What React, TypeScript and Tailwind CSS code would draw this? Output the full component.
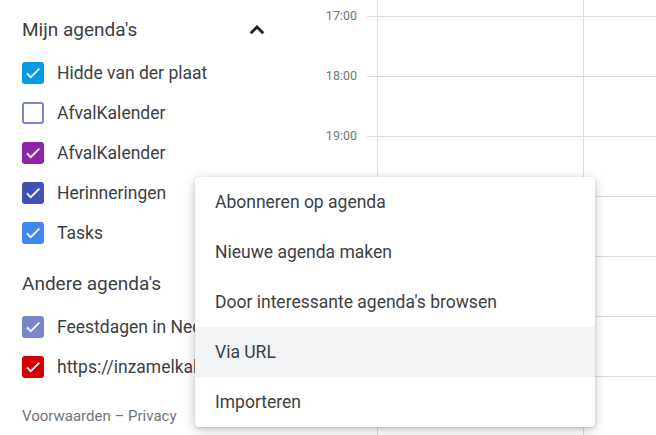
import React from 'react';

type Cal = { name: string; color: string; checked: boolean };

const mine: Cal[] = [
  { name: 'Hidde van der plaat', color: '#039be5', checked: true },
  { name: 'AfvalKalender', color: '#7986cb', checked: false },
  { name: 'AfvalKalender', color: '#8e24aa', checked: true },
  { name: 'Herinneringen', color: '#3f51b5', checked: true },
  { name: 'Tasks', color: '#4285f4', checked: true },
];

const other: Cal[] = [
  { name: 'Feestdagen in Nederland', color: '#7986cb', checked: true },
  { name: 'https://inzamelkalender.nl', color: '#d50000', checked: true },
];

const menuItems = [
  'Abonneren op agenda',
  'Nieuwe agenda maken',
  "Door interessante agenda's browsen",
  'Via URL',
  'Importeren',
];

function Checkbox({ color, checked }: { color: string; checked: boolean }) {
  // colour comes from data, so inline style
  return (
    <div
      className="w-[22px] h-[22px] rounded-[3px] flex items-center justify-center shrink-0 border-2"
      style={{ borderColor: color, background: checked ? color : 'transparent' }}
    >
      {checked && (
        <svg viewBox="0 0 24 24" className="w-[22px] h-[22px]">
          <path d="M9 16.17L4.83 12l-1.42 1.41L9 19 21 7l-1.41-1.41z" fill="white" stroke="white" strokeWidth="0.6" />
        </svg>
      )}
    </div>
  );
}

function CalRow({ cal }: { cal: Cal }) {
  return (
    <div className="h-[40px] flex items-center gap-[13px] whitespace-nowrap">
      <Checkbox color={cal.color} checked={cal.checked} />
      <span className="text-[17.5px] text-[#3c4043]">{cal.name}</span>
    </div>
  );
}

const hours = ['17:00', '18:00', '19:00', '', '', '', '', ''];

export default function App() {
  return (
    <div
      className="w-[656px] h-[435px] relative overflow-hidden bg-white flex"
      style={{ fontFamily: 'Roboto, "Noto Sans", sans-serif' }}
    >
      {/* Sidebar */}
      <div className="w-[300px] shrink-0 pl-[22px] pr-[29px] pt-[12px] overflow-hidden">
        <div className="h-[36px] flex items-center justify-between">
          <span className="text-[19px] text-[#3c4043]">Mijn agenda's</span>
          <svg viewBox="0 0 24 24" className="w-[28px] h-[28px]">
            <path d="M12 8l-6 6 1.41 1.41L12 10.83l4.59 4.58L18 14z" fill="#202124" stroke="#202124" strokeWidth="0.5" />
          </svg>
        </div>
        <div className="mt-[5px]">
          {mine.map((c, i) => (
            <CalRow key={i} cal={c} />
          ))}
        </div>
        <div className="h-[36px] mt-[13px] flex items-center">
          <span className="text-[19px] text-[#3c4043]">Andere agenda's</span>
        </div>
        <div className="mt-[5px]">
          {other.map((c, i) => (
            <CalRow key={i} cal={c} />
          ))}
        </div>
        <div className="h-[20px] mt-[19px] flex items-center text-[15px] text-[#70757a]">
          Voorwaarden – Privacy
        </div>
      </div>

      {/* Time labels */}
      <div className="w-[67px] shrink-0 pr-[10px] pt-[6px] flex flex-col items-end">
        {hours.map((h, i) => (
          <div key={i} className="h-[60px] shrink-0 leading-[20px] text-[12.5px] text-[#70757a]">
            {h}
          </div>
        ))}
      </div>

      {/* Grid */}
      <div className="flex-1 flex flex-col">
        <div className="h-[16px] shrink-0 flex">
          <div className="w-[10px]" />
          <div className="w-[206px] border-l border-[#dadce0]" />
          <div className="flex-1 border-l border-[#dadce0]" />
        </div>
        {hours.map((_, i) => (
          <div key={i} className="h-[60px] shrink-0 border-t border-[#dadce0] flex">
            <div className="w-[10px]" />
            <div className="w-[206px] border-l border-[#dadce0]" />
            <div className="flex-1 border-l border-[#dadce0]" />
          </div>
        ))}
      </div>

      {/* Menu */}
      <div className="absolute left-[195px] top-[177px] w-[400px] bg-white rounded-[4px] shadow-[0_3px_12px_rgba(0,0,0,0.22),0_1px_3px_rgba(0,0,0,0.12)] overflow-hidden">
        {menuItems.map((m) => (
          <div
            key={m}
            className={`h-[50px] flex items-center px-[20px] text-[17.5px] text-[#3c4043] ${
              m === 'Via URL' ? 'bg-[#f1f3f4]' : ''
            }`}
          >
            {m}
          </div>
        ))}
      </div>
    </div>
  );
}
